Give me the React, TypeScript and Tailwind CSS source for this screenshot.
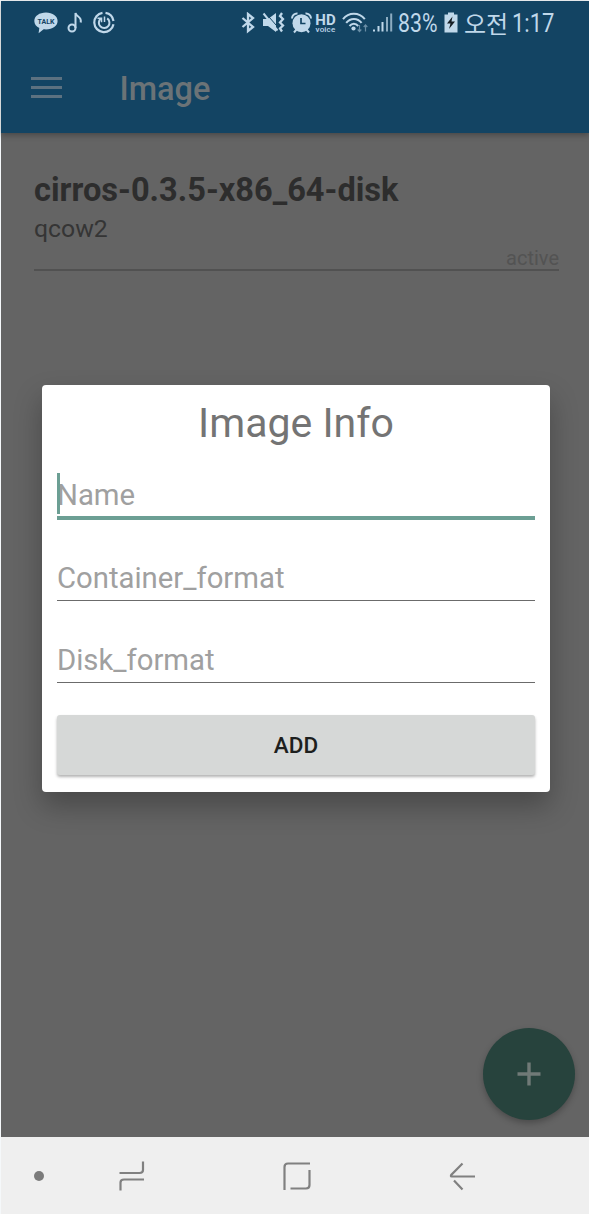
import type { ReactNode } from "react";

function StatusBar() {
  return (
    <div className="flex h-[44px] items-center text-[#c0d8ea]">
      <svg className="ml-[33px] shrink-0" width="24" height="22" viewBox="0 0 24 22">
        <path d="M12 .5C5.400.5.3 4 .3 9c0 3 2 5.700 5 7.100L4.600 21.300l5-4c.7.100 1.600.1 2.400.1 6.600 0 11.600-3.500 11.600-8.400S18.600.5 12 .5z" fill="currentColor" />
        <text x="12" y="11.800" textAnchor="middle" fontSize="7" fontWeight="700" fill="#134463" className="font-['Roboto',sans-serif]">TALK</text>
      </svg>
      <svg className="ml-[9px] shrink-0" width="16" height="22" viewBox="0 0 16 22" fill="none" stroke="currentColor" strokeWidth="2">
        <circle cx="5" cy="16" r="3.500" />
        <path d="M8.500 16V1c.8 4.500 6.500 3 5.200 9.500" />
      </svg>
      <svg className="ml-[9px] shrink-0" width="24" height="24" viewBox="0 0 24 24" fill="none" stroke="currentColor" strokeWidth="2.200">
        <path d="M13.500 1.800a9.700 9.700 0 0 1 8 8.200M21.500 13.200A9.700 9.700 0 1 1 10.500 1.800" />
        <path d="M15.200 7.400a5.300 5.300 0 1 1-6.600.4" strokeWidth="2" />
        <path d="M5.500 7.200h4v4M12.500 5.500V11" strokeWidth="1.500" />
      </svg>
      <svg className="ml-[125px] shrink-0" width="14" height="22" viewBox="0 0 14 22" fill="none" stroke="currentColor" strokeWidth="2.300">
        <path d="M1.500 6l10.500 9L7 19V2l5 4-10.500 9" />
      </svg>
      <svg className="ml-[7px] shrink-0" width="23" height="22" viewBox="0 0 23 22" fill="currentColor">
        <path d="M1 7h5l8-6v19l-8-6H1z" />
        <path d="M4 1.500l13.500 15.500" fill="none" stroke="#134463" strokeWidth="1" />
        <path d="M1.500 1.500l14 17" fill="none" stroke="currentColor" strokeWidth="2" />
        <path d="M20 1l-2 3 3 3-3 3.500 3 3-3 3 2 3" fill="none" stroke="currentColor" strokeWidth="2.300" />
      </svg>
      <svg className="ml-[6px] shrink-0" width="21" height="22" viewBox="0 0 21 22" fill="none" stroke="currentColor">
        <circle cx="10.500" cy="11.200" r="9" fill="currentColor" stroke="none" />
        <path d="M1 6.500a5 5 0 0 1 5.500-5M20 6.500a5 5 0 0 0-5.500-5M5.500 17.500L3 20.500M15.500 17.500l2.500 3" strokeWidth="2" />
        <path d="M10 6v5.500h4.500" stroke="#134463" strokeWidth="1.700" />
      </svg>
      <div className="ml-[2px] flex w-[23px] shrink-0 flex-col items-center pt-[1px]">
        <span className="text-[15px] leading-[12px] font-bold">HD</span>
        <span className="text-[8px] leading-[8px] font-medium tracking-[0.200px]">voice</span>
      </div>
      <svg className="ml-[5px] shrink-0" width="27" height="22" viewBox="0 0 27 22" fill="none" stroke="currentColor" strokeWidth="2">
        <path d="M1 7.200C6.700-.1 17-.1 22.800 7.200M4.200 10.800c4.200-5.200 11.200-5.200 15.400 0M7.500 14c2.500-3 6.200-3 8.700 0" />
        <circle cx="11.500" cy="16.500" r="2.100" fill="currentColor" stroke="none" />
        <path d="M17.500 13v6.500M15.700 17.500l1.800 2 1.800-2M23.500 19.500V13M21.700 15l1.800-2 1.800 2" strokeWidth="1.200" opacity=".5" />
      </svg>
      <svg className="ml-[4px] shrink-0" width="20" height="22" viewBox="0 0 20 22" fill="currentColor">
        <path d="M0 17.500h2v2H0zM4.500 14h2v5.500h-2zM8.500 10h2v9.500h-2z" />
        <path d="M13 5h2v14.500h-2zM17.200 1.500h2v18h-2z" opacity=".7" />
      </svg>
      <span className="ml-[5px] w-[40px] shrink-0 text-[25px] leading-none"><span className="inline-block origin-left scale-x-[0.850]">83%</span></span>
      <svg className="ml-[6px] shrink-0" width="14" height="22" viewBox="0 0 14 22" fill="currentColor">
        <path d="M4 .5h6v2h3.500v18H.5v-18H4z" />
        <path d="M8.500 4.500L3 11.500h3.500L5 17l6-7.500H7.500z" fill="#171f25" />
      </svg>
      <span className="ml-[6px] w-[45px] shrink-0 text-[24px] leading-none whitespace-nowrap font-['Noto_Sans_CJK_KR',sans-serif]">오전</span>
      <span className="ml-[3px] shrink-0 text-[25px] leading-none"><span className="inline-block origin-left scale-x-[0.880]">1:17</span></span>
    </div>
  );
}

function Field({ label, focused = false, className = "" }: { label: string; focused?: boolean; className?: string }) {
  return (
    <div className={`relative flex items-center ${focused ? "h-[47px] border-b-[4px] border-[#6c9f94] pt-[3px]" : "h-[48px] border-b border-[#6b6b6b] pt-[4px]"} ${className}`}>
      {focused && <span className="absolute top-0 left-0 h-[41px] w-[3px] bg-[#6c9f94]" />}
      <span className="text-[29.300px] leading-none text-[#a0a0a0]">{label}</span>
    </div>
  );
}

function NavIcon({ children, className }: { children: ReactNode; className: string }) {
  return (
    <svg className={className} width="32" height="32" viewBox="0 0 32 32" fill="none" stroke="#808080" strokeWidth="2.200">
      {children}
    </svg>
  );
}

export default function App() {
  return (
    <div className="relative flex h-[1214px] w-[589px] flex-col overflow-hidden bg-[#f5f8fa] pt-[1px] pl-[1px] font-['Roboto','Noto_Sans_CJK_KR',sans-serif]">
      <header className="z-10 flex h-[132px] shrink-0 flex-col bg-[#134463] shadow-[0_2px_6px_rgba(0,0,0,0.300)]">
        <StatusBar />
        <div className="flex h-[88px] items-center pl-[30px]">
          <div className="-mt-[4px] flex w-[31px] flex-col gap-[6px]">
            <span className="h-[3px] bg-[#5c7180]" />
            <span className="h-[3px] bg-[#5c7180]" />
            <span className="h-[3px] bg-[#5c7180]" />
          </div>
          <h1 className="ml-[57.500px] text-[32.500px] leading-none font-medium text-[#6b7377]">Image</h1>
        </div>
      </header>

      <main className="flex min-h-0 flex-1 flex-col bg-[#646464] px-[33px] pt-[39px]">
        <div className="flex h-[99px] w-[525px] flex-col border-b-2 border-[#515151]">
          <h2 className="text-[32.600px] leading-[36px] font-bold whitespace-nowrap text-[#2d2d2d]">cirros-0.3.5-x86_64-disk</h2>
          <p className="mt-[7px] text-[24.800px] leading-[28px] text-[#353535]">qcow2</p>
          <p className="text-right text-[20px] leading-[31px] text-[#535353]">active</p>
        </div>
      </main>

      <nav className="flex h-[77px] shrink-0 items-center bg-[#efefef]">
        <span className="ml-[33px] size-[10px] rounded-full bg-[#7b7b7b]" />
        <NavIcon className="ml-[72px]">
          <path d="M3.500 13h20q3.500 0 3.500-3V1.500M28 19.500H8q-3.500 0-3.500 3v8" />
        </NavIcon>
        <NavIcon className="ml-[133px]">
          <path d="M3.500 30V7q0-3.500 3.500-3.500h22M28.500 10v15q0 3.500-3.500 3.500H9.500" />
        </NavIcon>
        <NavIcon className="ml-[134px]">
          <path d="M28 16.500H4.500q-1 0-.3-1.500L15.500 3.500M7 20.500l8.500 9" />
        </NavIcon>
      </nav>

      <button aria-label="Add image" className="absolute top-[1028px] left-[483px] flex size-[92px] items-center justify-center rounded-full bg-[#27433d] shadow-[0_3px_6px_rgba(0,0,0,0.250)]">
        <svg width="24" height="24" viewBox="0 0 24 24" stroke="#707a77" strokeWidth="3.400">
          <path d="M12 .5v23M.5 12h23" />
        </svg>
      </button>

      <section role="dialog" className="absolute top-[385px] left-[42px] z-20 flex h-[407px] w-[508px] flex-col rounded-[4px] bg-white px-[15px] shadow-[0_14px_28px_rgba(0,0,0,0.280)]">
        <h2 className="mt-[14px] mb-[26px] text-center text-[41px] leading-[48px] text-[#747474]">Image Info</h2>
        <div className="flex w-[478px] flex-col">
          <Field label="Name" focused />
          <Field label="Container_format" className="mt-[33px]" />
          <Field label="Disk_format" className="mt-[34px]" />
          <button className="mt-[32px] h-[60px] rounded-[3px] bg-[#d6d8d7] pt-px text-[22.500px] font-medium text-[#1d1f1e] shadow-[0_2px_3px_rgba(0,0,0,0.300)]">ADD</button>
        </div>
      </section>
    </div>
  );
}
